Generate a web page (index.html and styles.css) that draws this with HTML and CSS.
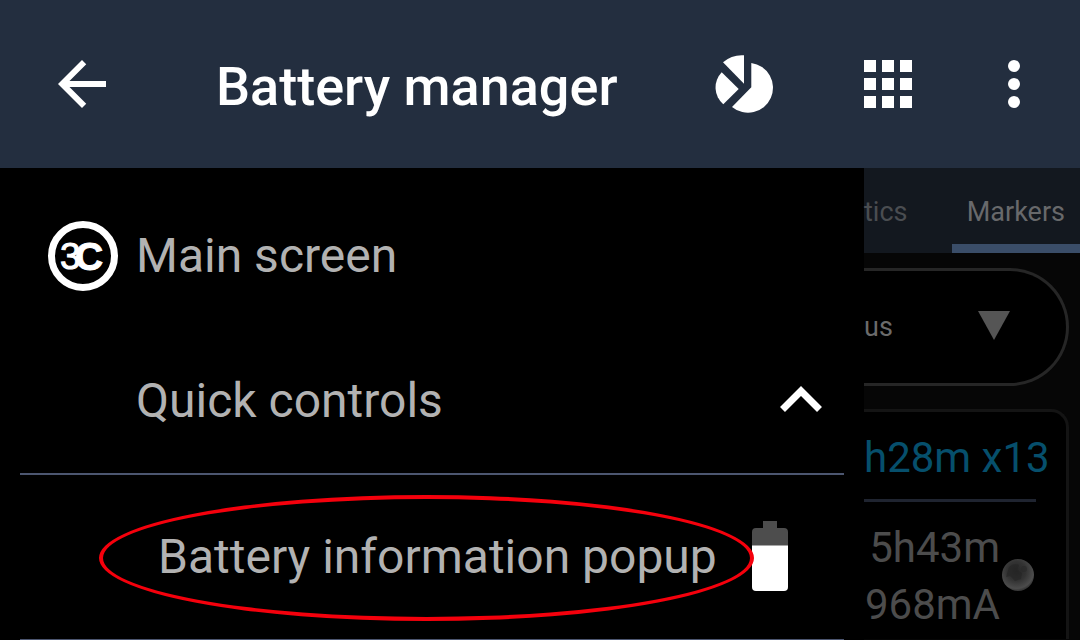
FILE: index.html
```html
<!DOCTYPE html>
<html lang="en">
<head>
    <meta charset="UTF-8">
    <meta name="viewport" content="width=device-width, initial-scale=1.0">
    <title>Battery manager</title>
    <link rel="stylesheet" href="styles.css">
</head>
<body>

    <header class="topbar">
        <button type="button" class="back" aria-label="Back">
            <svg width="48" height="48" viewBox="4 4 16 16"><path d="M20 11H7.83l5.59-5.59L12 4l-8 8 8 8 1.41-1.41L7.83 13H20z"/></svg>
        </button>
        <h1>Battery manager</h1>
        <button type="button" class="action" aria-label="Usage">
            <svg width="58" height="58" viewBox="0 0 58 58">
                <path d="M29 .3V28.700L8 7.300A29 29 0 0 1 29 .3z"/>
                <path d="M6.700 17.300L23.700 34L8.300 49.300A22 22 0 0 1 6.700 17.300z"/>
                <path d="M36.300 8A25 25 0 1 1 17 52L36.300 32.300z"/>
            </svg>
        </button>
        <button type="button" class="action" aria-label="Apps">
            <svg width="48" height="48" viewBox="0 0 48 48"><path d="M0 0h12v12H0zM18 0h12v12H18zM36 0h12v12H36zM0 18h12v12H0zM18 18h12v12H18zM36 18h12v12H36zM0 36h12v12H0zM18 36h12v12H18zM36 36h12v12H36z"/></svg>
        </button>
        <button type="button" class="more" aria-label="More options">
            <svg width="12" height="48" viewBox="0 0 12 48"><circle cx="6" cy="6" r="6"/><circle cx="6" cy="24" r="6"/><circle cx="6" cy="42" r="6"/></svg>
        </button>
    </header>

    <main class="screen">
        <nav class="drawer">
            <a href="#main" class="item">
                <svg class="logo" width="70" height="70" viewBox="0 0 70 70">
                    <circle cx="35" cy="35" r="31.5" fill="none" stroke="#fff" stroke-width="7"/>
                    <text x="12" y="48" font-size="37">3<tspan x="27" y="49" font-size="39" font-weight="bold">C</tspan></text>
                </svg>
                <span>Main screen</span>
            </a>
            <button type="button" class="item group" aria-expanded="true">
                <span>Quick controls</span>
                <svg width="42" height="30" viewBox="0 0 42 30"><path d="M2.500 23.500L21 5L39.500 23.500" fill="none" stroke="#fff" stroke-width="7"/></svg>
            </button>
            <a href="#popup" class="item sub">
                <span class="marked">Battery information popup</span>
                <svg width="36" height="72" viewBox="0 0 36 72">
                    <path fill="#4d4d4d" d="M11 0h14v7h7a4 4 0 0 1 4 4v14H0V11a4 4 0 0 1 4-4h7z"/>
                    <path d="M0 24.500h36V66a4 4 0 0 1-4 4H4a4 4 0 0 1-4-4z"/>
                </svg>
            </a>
        </nav>

        <section class="content">
            <div class="tabs">
                <a href="#statistics" class="tab">tics</a>
                <a href="#markers" class="tab active">Markers</a>
            </div>
            <div class="filter">
                <select aria-label="Filter">
                    <option>us</option>
                </select>
                <svg width="32" height="33" viewBox="0 0 32 33"><path d="M0 0h32L16 29z"/></svg>
            </div>
            <div class="card">
                <h2>h28m x13</h2>
                <div class="reading">
                    <p>5h43m<br>968mA</p>
                    <svg width="32" height="34" viewBox="0 0 32 34">
                        <defs>
                            <radialGradient id="moon" cx="45%" cy="38%" r="60%">
                                <stop offset="0" stop-color="#262626"/>
                                <stop offset=".5" stop-color="#333"/>
                                <stop offset=".9" stop-color="#4c4c4c"/>
                                <stop offset="1" stop-color="#383838"/>
                            </radialGradient>
                        </defs>
                        <circle cx="16" cy="16" r="16" fill="url(#moon)"/>
                        <path d="M7 8q5-5 10-2l-2 5 5 3-1 6-6 2-5-5-4 1z" fill="#242424" opacity=".6"/>
                        <circle cx="22" cy="10" r="3" fill="#292929" opacity=".6"/>
                    </svg>
                </div>
            </div>
        </section>
    </main>

</body>
</html>
```

FILE: styles.css
```css
* {
    box-sizing: border-box;
}
body {
    margin: 0;
    min-height: 100vh;
    display: flex;
    flex-direction: column;
    background-color: #000;
    color: #b2b2b2;
    font-family: Roboto, sans-serif;
}
button {
    padding: 0;
    border: 0;
    background: none;
    color: inherit;
    font-family: inherit;
    cursor: pointer;
}
a {
    color: inherit;
    text-decoration: none;
}
svg {
    display: block;
    flex: none;
    fill: #fff;
}

/* Top bar */
.topbar {
    display: flex;
    align-items: center;
    height: 168px;
    padding-right: 12px;
    background-color: #232e3f;
    color: #fff;
}
.topbar button {
    display: flex;
    justify-content: center;
}
.topbar .back {
    width: 164px;
}
.topbar h1 {
    flex: 1;
    margin: 0;
    padding: 4px 0 0 52px;
    font-size: 54px;
    font-weight: 500;
    white-space: nowrap;
}
.action {
    width: 144px;
}
.more {
    width: 108px;
}

.screen {
    flex: 1;
    display: flex;
}

/* Drawer */
.drawer {
    width: 80%;
    padding: 16px 20px 0;
}
.item {
    display: flex;
    align-items: center;
    width: 100%;
    height: 144px;
    font-size: 48px;
    line-height: 56px;
    white-space: nowrap;
}
.logo {
    margin: 0 18px 0 28px;
}
.logo text {
    font-family: "Liberation Sans", sans-serif;
    stroke: #fff;
    stroke-width: 1px;
}
.group {
    justify-content: space-between;
    height: 147px;
    padding: 0 22px 0 116px;
    border-bottom: 2px solid #4c5670;
}
.sub {
    justify-content: space-between;
    height: 165px;
    padding: 0 56px 0 138px;
    border-bottom: 1px solid #4c5670;
}
.marked {
    position: relative;
}
/* red ring drawn over the highlighted entry */
.marked::after {
    content: "";
    position: absolute;
    inset: -34px -37px -36px -59px;
    border: 4px solid #f5000c;
    border-radius: 50%;
}

/* Dimmed page behind the drawer */
.content {
    flex: 1;
    min-width: 0;
    background-color: #060606;
}
.tabs {
    display: flex;
    justify-content: space-between;
    height: 85px;
    background-color: #13181f;
    color: #4a4d51;
    font-size: 27px;
    line-height: 88px;
}
.active {
    padding: 0 15px;
    border-bottom: 9px solid #3a4d68;
    color: #68696b;
}
.filter {
    display: grid;
    align-items: center;
    margin: 15px 11px 0 0;
}
.filter select,
.filter svg {
    grid-area: 1 / 1;
}
.filter select {
    appearance: none;
    height: 118px;
    padding: 0;
    border: 3px solid #262626;
    border-left: 0;
    border-radius: 0 59px 59px 0;
    background-color: #000;
    color: #6b6b6b;
    font-family: inherit;
    font-size: 27px;
}
.filter svg {
    justify-self: end;
    margin-right: 59px;
    fill: #555;
    pointer-events: none;
}
.card {
    margin: 23px 11px 0 0;
    border: 3px solid #141414;
    border-width: 3px 3px 0 0;
    border-radius: 0 18px 0 0;
    background-color: #000;
    color: #4c4c4c;
    font-size: 42px;
    line-height: 57px;
    white-space: nowrap;
}
.card h2 {
    height: 90px;
    margin: 0 30px 0 0;
    padding-top: 17px;
    border-bottom: 3px solid #1f2430;
    color: #064f6c;
    font-size: inherit;
    font-weight: 400;
}
.reading {
    display: flex;
    justify-content: flex-end;
    align-items: center;
    gap: 2px;
    margin: 17px 32px 0 0;
    padding-bottom: 6px;
}
.reading p {
    margin: 0;
    text-align: right;
}
```
